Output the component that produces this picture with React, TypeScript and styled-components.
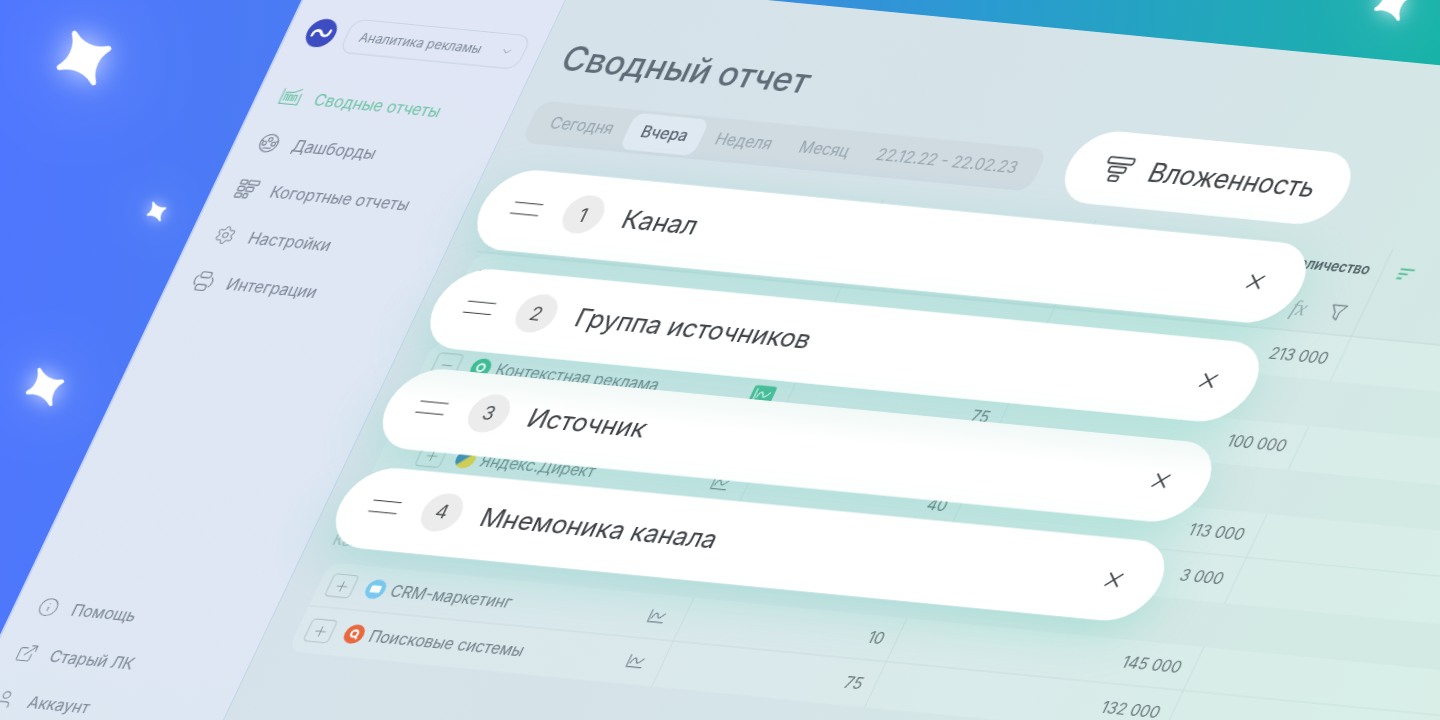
import React from "react";
import styled, { createGlobalStyle } from "styled-components";
import { ChevronDown, ExternalLink, Info, Minus, Plus, Settings, User, X } from "lucide-react";

const Global = createGlobalStyle`
  html, body { margin: 0; padding: 0; background: #4f76ff; }
  body { font-family: Inter, "Noto Sans", sans-serif; overflow: hidden; }
`;

const Scene = styled.div`
  position: relative;
  width: 1440px;
  height: 720px;
  overflow: hidden;
  background: linear-gradient(97deg, #4f76ff 0%, #4a7df0 25%, #3a8ce0 50%, #2a9bd0 65%, #1fabb4 85%, #13b7a1 100%);
`;

const Plane = styled.div`
  position: absolute;
  left: 0;
  top: 0;
  width: 1520px;
  height: 840px;
  display: flex;
  transform-origin: 0 0;
  transform: translate(324px, -43px) matrix(1, 0.097, -0.475, 1, 0, 0);
  filter: blur(0.7px);
`;

const Sidebar = styled.aside`
  width: 252px;
  flex: none;
  box-sizing: border-box;
  padding: 56px 0 78px 18px;
  display: flex;
  flex-direction: column;
  background: linear-gradient(180deg, #e0e6f5 0%, #dde7f2 100%);
  border-left: 2px solid #c4d3fa;
  margin-left: -2px;
`;

const Brand = styled.div`
  display: flex;
  align-items: center;
  gap: 11px;
  height: 34px;
`;

const Logo = styled.div`
  width: 28px;
  height: 28px;
  border-radius: 50%;
  background: #3d4cc0;
  display: flex;
  align-items: center;
  justify-content: center;
  flex: none;
`;

const Select = styled.div`
  width: 178px;
  height: 34px;
  box-sizing: border-box;
  border: 1px solid #cbd4e3;
  border-radius: 12px;
  display: flex;
  align-items: center;
  justify-content: space-between;
  padding: 0 10px 0 13px;
  font-size: 12.3px;
  color: #7e8999;
`;

const Nav = styled.nav<{ $bottom?: boolean }>`
  display: flex;
  flex-direction: column;
  margin-top: ${(p) => (p.$bottom ? "auto" : "24px")};
`;

const NavItem = styled.div<{ $active?: boolean }>`
  height: 46px;
  display: flex;
  align-items: center;
  gap: 14px;
  font-size: 15.4px;
  color: ${(p) => (p.$active ? "#6ec4a5" : "#7d8796")};
  & > svg { flex: none; width: 20px; height: 20px; margin-left: 4px; }
`;

const Main = styled.main`
  position: relative;
  flex: 1;
  box-sizing: border-box;
  padding: 54px 0 0 22px;
  display: flex;
  flex-direction: column;
  background: linear-gradient(100deg, #d6e2ea 0%, #d5e4e8 45%, #d3e9e4 75%, #d2ebe3 100%);
`;

const Title = styled.h1`
  margin: 0 0 0 3px;
  height: 40px;
  line-height: 40px;
  font-size: 32.7px;
  font-weight: 500;
  color: #5f6c78;
`;

const Tabs = styled.div`
  margin-top: 22.5px;
  width: 508px;
  height: 42px;
  box-sizing: border-box;
  padding: 3px 6px;
  display: flex;
  align-items: center;
  border-radius: 14px;
  background: #cfdae1;
`;

const Tab = styled.div<{ $active?: boolean }>`
  height: 36px;
  display: flex;
  align-items: center;
  padding: 0 14.2px;
  font-size: 15.2px;
  border-radius: 10px;
  white-space: nowrap;
  color: ${(p) => (p.$active ? "#56636f" : "#98a5ae")};
  background: ${(p) => (p.$active ? "#dfe9f1" : "transparent")};
  font-weight: ${(p) => (p.$active ? 500 : 400)};
`;

const Table = styled.div`
  margin: 21.5px 0 0 8px;
  display: flex;
  flex-direction: column;
`;

const Group = styled.div`
  display: flex;
  flex-direction: column;
  border-radius: 14px;
  background: rgba(240, 255, 250, 0.2);
`;

const RowBox = styled.div<{ $header?: boolean; $line?: boolean }>`
  display: flex;
  height: ${(p) => (p.$header ? "88px" : "44.3px")};
  box-sizing: border-box;
  border-bottom: ${(p) => (p.$line ? "1px solid rgba(130, 165, 165, 0.15)" : "none")};
`;

const Band = styled.div`
  height: 44.3px;
  display: flex;
  align-items: center;
  font-size: 14px;
  color: #a0b7ba;
  margin-left: -6px;
`;

const NameCell = styled.div<{ $indent?: boolean }>`
  width: 365px;
  flex: none;
  box-sizing: border-box;
  display: flex;
  align-items: center;
  padding: 0 15px 0 ${(p) => (p.$indent ? "37px" : "10px")};
  border-right: 1px solid rgba(130, 165, 165, 0.15);
  font-size: 15.3px;
  color: #738088;
`;

const ValueCell = styled.div<{ $w: number }>`
  width: ${(p) => p.$w}px;
  flex: none;
  box-sizing: border-box;
  display: flex;
  align-items: center;
  justify-content: flex-end;
  padding-right: 12px;
  border-right: 1px solid rgba(130, 165, 165, 0.15);
  font-size: 15.2px;
  color: #6b797d;
`;

const HeadCell = styled.div`
  width: 297px;
  flex: none;
  box-sizing: border-box;
  display: flex;
  flex-direction: column;
  align-items: flex-end;
  justify-content: space-between;
  padding: 14px 12px 10px 0;
  border-right: 1px solid rgba(130, 165, 165, 0.15);
  font-size: 13.5px;
  font-weight: 600;
  color: #4d5b60;
`;

const HeadTools = styled.div`
  display: flex;
  align-items: center;
  gap: 22px;
  padding-right: 3px;
  color: #7c8b90;
`;

const Fx = styled.span`
  font-family: "Liberation Serif", serif;
  font-size: 20px;
  font-weight: 400;
  color: #9aa9ad;
`;

const SortSlot = styled.div`
  padding: 13px 0 0 15px;
`;

const PlusBox = styled.div`
  width: 25px;
  height: 23px;
  flex: none;
  box-sizing: border-box;
  border: 1px solid #b4c4c8;
  border-radius: 4px;
  display: flex;
  align-items: center;
  justify-content: center;
  color: #7e8c90;
  margin-right: 12px;
`;

const SourceIcon = styled.div<{ $bg: string }>`
  width: 19px;
  height: 19px;
  flex: none;
  border-radius: 50%;
  background: ${(p) => p.$bg};
  margin-right: 6px;
  display: flex;
  align-items: center;
  justify-content: center;
  overflow: hidden;
`;

const ChartSlot = styled.div<{ $on?: boolean }>`
  margin-left: auto;
  width: 22px;
  height: 20px;
  border-radius: 3px;
  display: flex;
  align-items: center;
  justify-content: center;
  background: ${(p) => (p.$on ? "#46bb93" : "transparent")};
  color: ${(p) => (p.$on ? "#ffffff" : "#6f7f86")};
`;

const Overlay = styled.div`
  position: absolute;
  left: 14px;
  top: 93px;
  width: 820px;
  display: flex;
  flex-direction: column;
  align-items: flex-end;
  gap: 19.2px;
`;

const NestingButton = styled.div`
  width: 278px;
  height: 72px;
  box-sizing: border-box;
  border-radius: 36px;
  background: #fff;
  display: flex;
  align-items: center;
  gap: 18px;
  padding-left: 35px;
  font-size: 25.2px;
  color: #3f4347;
`;

const Card = styled.div<{ $fade?: boolean }>`
  width: 820px;
  height: 80px;
  flex: none;
  box-sizing: border-box;
  border-radius: 40px;
  background: ${(p) => (p.$fade ? "linear-gradient(180deg, #f1f9f7 0%, #ffffff 40%)" : "#ffffff")};
  box-shadow: 0 14px 46px rgba(80, 205, 180, 0.3);
  display: flex;
  align-items: center;
  padding: 0 34px 0 30px;
  color: #3f4347;
`;

const Lead = styled.div`
  display: flex;
  align-items: center;
  padding-bottom: 4px;
  font-size: 25px;
`;

const Handle = styled.div`
  width: 28px;
  height: 12px;
  flex: none;
  box-sizing: border-box;
  border-top: 1.6px solid #3f4347;
  border-bottom: 1.6px solid #3f4347;
  margin-right: 24px;
`;

const Num = styled.div`
  width: 38px;
  height: 38px;
  flex: none;
  border-radius: 50%;
  background: #ececec;
  display: flex;
  align-items: center;
  justify-content: center;
  font-size: 18px;
  color: #4a4d50;
  margin-right: 21px;
`;

const Close = styled.div`
  margin-left: auto;
  display: flex;
  color: #3f4347;
`;

const StarWrap = styled.svg<{ $x: number; $y: number; $s: number; $r: number; $glow: number }>`
  position: absolute;
  left: ${(p) => p.$x - p.$s / 2}px;
  top: ${(p) => p.$y - p.$s / 2}px;
  width: ${(p) => p.$s}px;
  height: ${(p) => p.$s}px;
  transform: rotate(${(p) => p.$r}deg);
  overflow: visible;
  filter: drop-shadow(0 0 ${(p) => p.$glow}px rgba(255, 255, 255, 0.8))
    drop-shadow(0 0 ${(p) => p.$glow * 3}px rgba(255, 255, 255, 0.4));
`;

const Star = (p: { x: number; y: number; s: number; r: number; glow: number }) => (
  <StarWrap $x={p.x} $y={p.y} $s={p.s} $r={p.r} $glow={p.glow} viewBox="0 0 100 100">
    <path
      d="M50 0 C54 0 55 4 56 10 C60 26 74 40 90 44 C96 45 100 46 100 50 C100 54 96 55 90 56 C74 60 60 74 56 90 C55 96 54 100 50 100 C46 100 45 96 44 90 C40 74 26 60 10 56 C4 55 0 54 0 50 C0 46 4 45 10 44 C26 40 40 26 44 10 C45 4 46 0 50 0 Z"
      fill="#fff"
    />
  </StarWrap>
);

const ChartIcon = () => (
  <svg width="18" height="16" viewBox="0 0 18 16" fill="none" stroke="currentColor" strokeWidth="1.1">
    <path d="M2 1 V13 H17" />
    <path d="M4 10 C6 3 8 3 9.5 7 C11 11 13 8 16 4" />
  </svg>
);

const SortIcon = () => (
  <svg width="16" height="12" viewBox="0 0 16 12" fill="none" stroke="#56bf98" strokeWidth="2">
    <path d="M1 1.5 H15 M1 6 H10 M1 10.5 H6" />
  </svg>
);

const FunnelIcon = () => (
  <svg width="18" height="18" viewBox="0 0 18 18" fill="none" stroke="currentColor" strokeWidth="1.3" strokeLinejoin="round">
    <path d="M2 2 H16 L11 9 V16 L7 13.5 V9 Z" />
  </svg>
);

const LayersIcon = () => (
  <svg width="28" height="28" viewBox="0 0 28 28" fill="none" stroke="#3f4347" strokeWidth="1.7" strokeLinejoin="round">
    <rect x="1.5" y="3" width="25" height="6" rx="2" />
    <rect x="6" y="12" width="16" height="5.5" rx="2" />
    <rect x="9.5" y="21" width="9" height="5" rx="2" />
  </svg>
);

const ReportIcon = () => (
  <svg viewBox="0 0 20 20" fill="none" stroke="#6ec4a5" strokeWidth="1.2">
    <path d="M1 2 V17 H19 V6" />
    <path d="M4 14 V8 H6.5 V14 M8.5 14 V8 H11 V14 M13 14 V8 H15.5 V14" />
    <path d="M3 6 L12 5 L18 1.5" />
  </svg>
);

const DashIcon = () => (
  <svg viewBox="0 0 20 20" fill="none" stroke="#7d8796" strokeWidth="1.2">
    <circle cx="10" cy="10" r="8.6" />
    <circle cx="10" cy="6.5" r="1.9" />
    <circle cx="5.5" cy="10.5" r="1.9" />
    <circle cx="14.5" cy="10.5" r="1.9" />
    <path d="M6 15 H14 M2 8 H4 M16 8 H18" />
  </svg>
);

const CohortIcon = () => (
  <svg viewBox="0 0 20 20" fill="none" stroke="#7d8796" strokeWidth="1.3">
    <rect x="1" y="1.5" width="6" height="4" rx="0.8" />
    <rect x="9" y="1.5" width="10" height="4" rx="0.8" />
    <rect x="1" y="8" width="6" height="4" rx="0.8" />
    <rect x="9" y="8" width="7" height="4" rx="0.8" />
    <rect x="1" y="14.5" width="6" height="4" rx="0.8" />
    <rect x="9" y="14.5" width="4" height="4" rx="0.8" />
  </svg>
);

const IntegrationIcon = () => (
  <svg viewBox="0 0 20 20" fill="none" stroke="#7d8796" strokeWidth="1.2" strokeLinecap="round">
    <rect x="5" y="1" width="10" height="5.5" rx="2" />
    <rect x="5" y="13.5" width="10" height="5.5" rx="2" />
    <path d="M3 14 C0.5 12 0.5 7 3 5 M17 6 C19.5 8 19.5 13 17 15" />
  </svg>
);

const cards = ["Канал", "Группа источников", "Источник", "Мнемоника канала"];

export default function App() {
  return (
    <Scene>
      <Global />
      <Plane>
        <Sidebar>
          <Brand>
            <Logo>
              <svg width="20" height="12" viewBox="0 0 20 12" fill="none" stroke="#fff" strokeWidth="2.6" strokeLinecap="round">
                <path d="M2 9 C2 2 8 3 10 6 C12 9 18 10 18 3" />
              </svg>
            </Logo>
            <Select>
              Аналитика рекламы
              <ChevronDown size={13} strokeWidth={1.4} />
            </Select>
          </Brand>
          <Nav>
            <NavItem $active><ReportIcon />Сводные отчеты</NavItem>
            <NavItem><DashIcon />Дашборды</NavItem>
            <NavItem><CohortIcon />Когортные отчеты</NavItem>
            <NavItem><Settings strokeWidth={1.2} />Настройки</NavItem>
            <NavItem><IntegrationIcon />Интеграции</NavItem>
          </Nav>
          <Nav $bottom>
            <NavItem><Info strokeWidth={1.2} />Помощь</NavItem>
            <NavItem><ExternalLink strokeWidth={1.2} />Старый ЛК</NavItem>
            <NavItem><User strokeWidth={1.2} />Аккаунт</NavItem>
          </Nav>
        </Sidebar>
        <Main>
          <Title>Сводный отчет</Title>
          <Tabs>
            <Tab>Сегодня</Tab>
            <Tab $active>Вчера</Tab>
            <Tab>Неделя</Tab>
            <Tab>Месяц</Tab>
            <Tab>22.12.22 - 22.02.23</Tab>
          </Tabs>
          <Table>
            <RowBox $header $line>
              <NameCell>Канал</NameCell>
              <ValueCell $w={213}>Показы</ValueCell>
              <HeadCell>
                Количество
                <HeadTools>
                  <Fx><i>fx</i></Fx>
                  <FunnelIcon />
                </HeadTools>
              </HeadCell>
              <SortSlot><SortIcon /></SortSlot>
            </RowBox>
            <Group>
              <RowBox>
                <NameCell>Все каналы</NameCell>
                <ValueCell $w={213}>115</ValueCell>
                <ValueCell $w={297}>213 000</ValueCell>
              </RowBox>
            </Group>
            <Band />
            <Group>
              <RowBox>
                <NameCell>
                  <PlusBox><Minus size={16} strokeWidth={1.2} /></PlusBox>
                  <SourceIcon $bg="#3fb98f">
                    <svg width="11" height="11" viewBox="0 0 11 11" fill="none" stroke="#fff" strokeWidth="2"><circle cx="5.5" cy="5" r="3.5" /></svg>
                  </SourceIcon>
                  Контекстная реклама
                  <ChartSlot $on><ChartIcon /></ChartSlot>
                </NameCell>
                <ValueCell $w={213}>75</ValueCell>
                <ValueCell $w={297}>100 000</ValueCell>
              </RowBox>
            </Group>
            <Band />
            <Group>
              <RowBox $line>
                <NameCell $indent>
                  <PlusBox><Plus size={16} strokeWidth={1.2} /></PlusBox>
                  <SourceIcon $bg="linear-gradient(135deg, #3c7fb8 45%, #f2cf3d 55%)" />
                  Яндекс.Директ
                  <ChartSlot><ChartIcon /></ChartSlot>
                </NameCell>
                <ValueCell $w={213}>40</ValueCell>
                <ValueCell $w={297}>113 000</ValueCell>
              </RowBox>
              <RowBox>
                <NameCell $indent>
                  <PlusBox><Plus size={16} strokeWidth={1.2} /></PlusBox>
                  Google Ads
                  <ChartSlot><ChartIcon /></ChartSlot>
                </NameCell>
                <ValueCell $w={213}>35</ValueCell>
                <ValueCell $w={297}>3 000</ValueCell>
              </RowBox>
            </Group>
            <Band>Каналы</Band>
            <Group>
              <RowBox $line>
                <NameCell>
                  <PlusBox><Plus size={16} strokeWidth={1.2} /></PlusBox>
                  <SourceIcon $bg="#7cc8f2">
                    <svg width="11" height="9" viewBox="0 0 11 9" fill="#fff"><rect x="0.5" y="1" width="10" height="7" rx="1.5" /></svg>
                  </SourceIcon>
                  CRM-маркетинг
                  <ChartSlot><ChartIcon /></ChartSlot>
                </NameCell>
                <ValueCell $w={213}>10</ValueCell>
                <ValueCell $w={297}>145 000</ValueCell>
              </RowBox>
              <RowBox>
                <NameCell>
                  <PlusBox><Plus size={16} strokeWidth={1.2} /></PlusBox>
                  <SourceIcon $bg="#e8693f">
                    <svg width="11" height="11" viewBox="0 0 11 11" fill="none" stroke="#fff" strokeWidth="2"><circle cx="5.5" cy="5" r="3.2" /><path d="M7 7 L9.5 10" /></svg>
                  </SourceIcon>
                  Поисковые системы
                  <ChartSlot><ChartIcon /></ChartSlot>
                </NameCell>
                <ValueCell $w={213}>75</ValueCell>
                <ValueCell $w={297}>132 000</ValueCell>
              </RowBox>
            </Group>
          </Table>
          <Overlay>
            <NestingButton>
              <LayersIcon />
              Вложенность
            </NestingButton>
            {cards.map((label, i) => (
              <Card key={label} $fade={i === 2}>
                <Lead>
                  <Handle />
                  <Num>{i + 1}</Num>
                  {label}
                </Lead>
                <Close><X size={24} strokeWidth={1.6} /></Close>
              </Card>
            ))}
          </Overlay>
        </Main>
      </Plane>
      <Star x={84} y={58} s={58} r={-21} glow={14} />
      <Star x={156} y={211} s={21} r={-21} glow={7} />
      <Star x={45} y={387} s={40} r={-18} glow={10} />
      <Star x={1392} y={3} s={38} r={-21} glow={9} />
    </Scene>
  );
}
